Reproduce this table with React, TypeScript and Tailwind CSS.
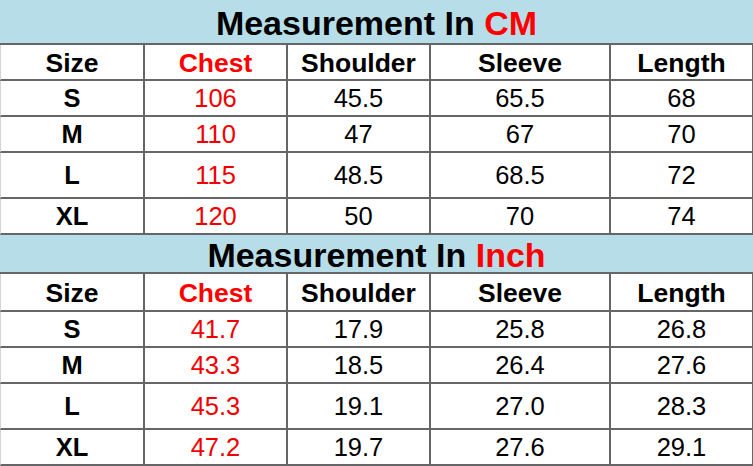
const cols = ["Size", "Chest", "Shoulder", "Sleeve", "Length"];

const cm = [
  ["S", "106", "45.5", "65.5", "68"],
  ["M", "110", "47", "67", "70"],
  ["L", "115", "48.5", "68.5", "72"],
  ["XL", "120", "50", "70", "74"],
];

const inch = [
  ["S", "41.7", "17.9", "25.8", "26.8"],
  ["M", "43.3", "18.5", "26.4", "27.6"],
  ["L", "45.3", "19.1", "27.0", "28.3"],
  ["XL", "47.2", "19.7", "27.6", "29.1"],
];

const grid =
  "grid grid-cols-[144px_143px_143px_180px_143px] border-b-2 border-[#666] bg-white";

function Cell({ children, className = "" }: { children: React.ReactNode; className?: string }) {
  return (
    <div className={`flex items-center justify-center border-r-2 border-[#666] pt-[2px] ${className}`}>
      {children}
    </div>
  );
}

function Section({
  unit,
  rows,
  titleH,
  headH,
}: {
  unit: string;
  rows: string[][];
  titleH: string;
  headH: string;
}) {
  return (
    <div>
      <div
        className={`flex items-center justify-center border-b-2 border-[#666] bg-[#b7dee8] pt-[3px] text-[34px] font-bold text-black ${titleH}`}
      >
        Measurement In&nbsp;<span className="text-[#ff0000]">{unit}</span>
      </div>
      <div className={`${grid} ${headH} border-l border-l-[#d4d4d4] text-[26.5px] font-bold`}>
        {cols.map((c, i) => (
          <Cell key={c} className={i === 1 ? "text-[#ff0000]" : "text-black"}>
            {c}
          </Cell>
        ))}
      </div>
      {rows.map((r) => (
        <div
          key={r[0]}
          className={`${grid} ${r[0] === "L" ? "h-[46px]" : "h-[36px]"} border-l border-l-[#d4d4d4] text-[25.5px]`}
        >
          {r.map((v, i) => (
            <Cell
              key={i}
              className={i === 0 ? "font-bold text-black" : i === 1 ? "text-[#f00000]" : "text-black"}
            >
              {v}
            </Cell>
          ))}
        </div>
      ))}
    </div>
  );
}

export default function App() {
  return (
    <div
      className="h-[466px] w-[753px] overflow-hidden bg-white leading-none"
      style={{ fontFamily: '"Liberation Sans", Arial, sans-serif' }}
    >
      <Section unit="CM" rows={cm} titleH="h-[45px]" headH="h-[36px]" />
      <Section unit="Inch" rows={inch} titleH="h-[39px]" headH="h-[38px]" />
    </div>
  );
}
